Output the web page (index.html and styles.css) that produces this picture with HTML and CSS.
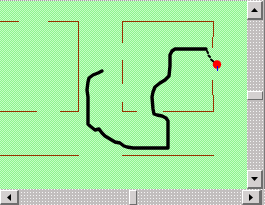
FILE: index.html
```html
<!DOCTYPE html>
<html>
<head>
<meta charset="utf-8">
<link rel="stylesheet" href="styles.css">
</head>
<body>
<div class="window">
  <div class="top">
    <div class="canvas">
      <svg class="map" width="247" height="189" viewBox="0 0 247 189">
        <g class="walls" shape-rendering="crispEdges">
          <path d="M0 21.5H19M48 21.5H79M78.5 21V111M0 111.5H37M60 111.5H79
                   M122.5 21V43M122.5 60V84M122.5 102V111M122 21.5H214
                   M213.5 21V37M212.5 37V48M212.5 80V95M213.5 95V111
                   M122 111.5H137M163 111.5H214M0 155.5H79M122 155.5H214"/>
        </g>
        <polyline class="trail" points="102,71 98,73 93,75 89,78 88,82 87,90 88,97 88,103 88,124 90,126 95,130 99,129 102,133 105,136 110,139 115,142 120,143 124,146 127,147 133,148 168,148 168,121 166,118 162,116 157,115 154,114 153,109 152,97 153,92 155,87 160,83 165,80 169,76 170,66 170,55 172,51 175,49 206,49"/>
        <path class="trail dash" d="M207 51L208 53M208.5 55.5L210 57M211 59.5L214 62"/>
        <circle class="dot" cx="217" cy="64.5" r="4.2"/>
        <path class="blue" d="M217.5 66V71" shape-rendering="crispEdges"/>
      </svg>
    </div>
    <div class="vscroll">
      <div class="btn vbtn">
        <svg width="7" height="4" viewBox="0 0 7 4"><polygon points="3.5,0 7,4 0,4"/></svg>
      </div>
      <div class="vtrack">
        <div class="vthumb"></div>
      </div>
      <div class="btn vbtn">
        <svg width="7" height="4" viewBox="0 0 7 4"><polygon points="0,0 7,0 3.5,4"/></svg>
      </div>
    </div>
  </div>
  <div class="hscroll">
    <div class="btn hbtn">
      <svg width="4" height="7" viewBox="0 0 4 7"><polygon points="0,3.5 4,0 4,7"/></svg>
    </div>
    <div class="htrack">
      <div class="hthumb"></div>
    </div>
    <div class="btn hbtn">
      <svg width="4" height="7" viewBox="0 0 4 7"><polygon points="0,0 4,3.5 0,7"/></svg>
    </div>
    <div class="htail"></div>
  </div>
</div>
</body>
</html>
```

FILE: styles.css
```css
html, body {
  margin: 0;
  padding: 0;
  background: #c0c0c0;
}

.window {
  width: 265px;
  height: 205px;
  display: flex;
  flex-direction: column;
  overflow: hidden;
}

.top {
  display: flex;
  height: 189px;
}

.canvas {
  width: 247px;
  height: 189px;
  background-color: #a8f8a8;
  background-image: conic-gradient(#8ef28e 25%, #c4ffc4 0 50%, #8ef28e 0 75%, #c4ffc4 0);
  background-size: 2px 2px;
  position: relative;
}

.canvas::before {
  content: "";
  position: absolute;
  left: 0;
  top: 0;
  width: 100%;
  height: 1px;
  background: repeating-linear-gradient(90deg, #a0a0a0 0 1px, #e8e8e8 1px 2px);
}

.map {
  display: block;
}

.walls {
  stroke: #993300;
  stroke-width: 1;
  fill: none;
}

.trail {
  fill: none;
  stroke: #000;
  stroke-width: 3.4;
  stroke-linejoin: round;
  stroke-linecap: round;
}

.dash {
  stroke-width: 2;
}

.dot {
  fill: #ff0000;
}

.blue {
  stroke: #0000ff;
  stroke-width: 1;
}

/* scrollbars */
.vscroll {
  width: 18px;
  height: 189px;
  display: flex;
  flex-direction: column;
  align-items: flex-start;
  background-image:
    linear-gradient(90deg, transparent 1px, #c2bebe 1px),
    linear-gradient(transparent 1px, #c2bebe 1px);
  background-color: #f4f4f4;
  background-size: 3px 3px;
  border-right: 1px solid #7a7a7a;
  box-sizing: border-box;
}

.btn {
  box-sizing: border-box;
  display: flex;
  align-items: center;
  justify-content: center;
  background-color: #d4d0d0;
  border-top: 1px solid #ffffff;
  border-left: 1px solid #ffffff;
  border-right: 2px solid #6e6e6e;
  border-bottom: 2px solid #6e6e6e;
  flex: none;
}

.btn polygon {
  fill: #000;
}

.vbtn {
  width: 16px;
  height: 19px;
}

.vscroll .vbtn:first-child {
  margin-top: 1px;
}

.vtrack {
  flex: 1;
  width: 17px;
}

.vthumb {
  margin-top: 71px;
  width: 16px;
  height: 9px;
  box-sizing: border-box;
  background-color: #d4d0d0;
  border-top: 1px solid #ffffff;
  border-left: 1px solid #ffffff;
  border-right: 1px solid #6e6e6e;
  border-bottom: 1px solid #6e6e6e;
}

.hscroll {
  height: 16px;
  display: flex;
  background-image:
    linear-gradient(90deg, transparent 1px, #c2bebe 1px),
    linear-gradient(transparent 1px, #c2bebe 1px);
  background-color: #f4f4f4;
  background-size: 3px 3px;
  box-sizing: border-box;
  padding-top: 1px;
}

.hbtn {
  width: 19px;
  height: 15px;
}

.htrack {
  flex: 1;
  display: flex;
}

.hthumb {
  margin-left: 110px;
  width: 8px;
  height: 15px;
  box-sizing: border-box;
  background-color: #d4d0d0;
  border-left: 1px solid #ffffff;
  border-top: 1px solid #ffffff;
  border-right: 1px solid #6e6e6e;
  border-bottom: 1px solid #6e6e6e;
}

.htail {
  width: 4px;
  border-left: 1px solid #6e6e6e;
  box-sizing: border-box;
}
```
